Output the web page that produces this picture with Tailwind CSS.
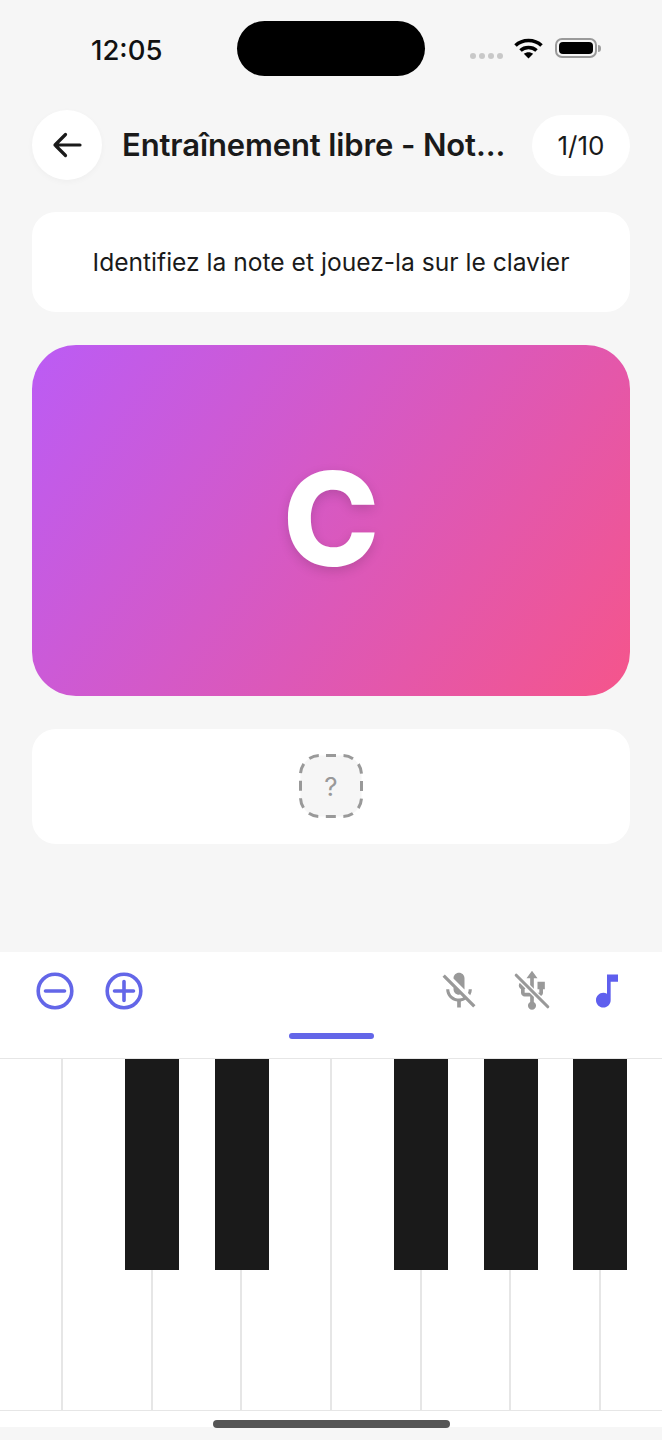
<!DOCTYPE html>
<html lang="fr">
<head>
    <meta charset="UTF-8">
    <meta name="viewport" content="width=device-width, initial-scale=1.0">
    <title>Entraînement libre</title>
    <script src="https://cdn.jsdelivr.net/npm/@tailwindcss/browser@4"></script>
</head>
<body class="bg-[#f6f6f6]">
    <div class="w-[662px] h-[1440px] overflow-hidden flex flex-col bg-[#f6f6f6] font-['Inter',sans-serif] text-[#1a1a1a]">

        <!-- Status bar -->
        <div class="h-[110px] shrink-0 flex items-start pt-[21px]">
            <div class="w-[237px] pl-[91px] pt-[13px] text-[27.5px] leading-[32px] font-medium text-[#111]">12:05</div>
            <div class="w-[188px] h-[55px] rounded-full bg-black"></div>
            <div class="flex items-center pl-[45px] pt-[17px]">
                <div class="flex gap-[3px] mt-[15px]">
                    <span class="w-[6px] h-[6px] rounded-full bg-[#c8c8c8]"></span>
                    <span class="w-[6px] h-[6px] rounded-full bg-[#c8c8c8]"></span>
                    <span class="w-[6px] h-[6px] rounded-full bg-[#c8c8c8]"></span>
                    <span class="w-[6px] h-[6px] rounded-full bg-[#c8c8c8]"></span>
                </div>
                <svg class="ml-[11px]" width="29" height="21" viewBox="0 0 29 21" fill="none">
                    <path d="M1.5 7.5C8.5 .8 20.5 .8 27.5 7.5" stroke="#000" stroke-width="3.6"/>
                    <path d="M6.5 12.5C10.8 8.5 18.2 8.5 22.5 12.5" stroke="#000" stroke-width="3.6"/>
                    <path d="M14.5 20.5L9.8 15.8C12.4 13.6 16.6 13.6 19.2 15.8Z" fill="#000"/>
                </svg>
                <div class="ml-[12px] w-[42px] h-[20px] rounded-[7px] border-2 border-[#9a9a9a] p-[2px] mb-[1px]">
                    <div class="w-full h-full rounded-[4px] bg-black"></div>
                </div>
                <div class="ml-[1px] w-[3px] h-[7px] rounded-r-full bg-[#a0a0a0]"></div>
            </div>
        </div>

        <!-- Header -->
        <div class="h-[70px] shrink-0 flex items-center pl-[32px] pr-[32px]">
            <button class="w-[70px] h-[70px] shrink-0 rounded-full bg-white flex items-center justify-center shadow-[0_2px_6px_rgba(0,0,0,0.03)]">
                <svg width="32" height="32" viewBox="0 0 32 32" fill="none" stroke="#1a1a1a" stroke-width="3.2" stroke-linecap="round" stroke-linejoin="round">
                    <path d="M29 16H4M14.5 5.5L4 16l10.5 10.5"/>
                </svg>
            </button>
            <h1 class="ml-[20px] w-[410px] shrink-0 whitespace-nowrap text-[31px] leading-[36px] font-semibold tracking-[-0.12px]">Entraînement libre - Not...</h1>
            <div class="w-[98px] h-[61px] shrink-0 rounded-full bg-white flex items-center justify-center text-[26px]">1/10</div>
        </div>

        <!-- Instruction -->
        <div class="mx-[32px] mt-[32px] h-[100px] shrink-0 rounded-[24px] bg-white flex items-center justify-center text-[24.6px] leading-[30px]">
            Identifiez la note et jouez-la sur le clavier
        </div>

        <!-- Note card -->
        <div class="mx-[32px] mt-[33px] h-[351px] shrink-0 rounded-[44px] bg-linear-[125deg] from-[#bb5cf5] to-[#f5558b] flex items-center justify-center">
            <span class="mb-[4px] text-[130px] leading-none font-[850] text-white [text-shadow:0_4px_12px_rgba(0,0,0,0.15)]">C</span>
        </div>

        <!-- Answer slot -->
        <div class="mx-[32px] mt-[33px] h-[115px] shrink-0 rounded-[24px] bg-white flex items-center justify-center">
            <div class="relative mb-[1px] w-[64px] h-[64px] flex items-center justify-center text-[26px] text-[#999]">
                <svg class="absolute inset-0" width="64" height="64" viewBox="0 0 64 64">
                    <rect x="1.5" y="1.5" width="61" height="61" rx="19" fill="#f6f6f6" stroke="#999" stroke-width="3" stroke-dasharray="10 7.58" stroke-dashoffset="-6.5"/>
                </svg>
                <span class="relative">?</span>
            </div>
        </div>

        <div class="flex-1"></div>

        <!-- Toolbar -->
        <div class="h-[107px] shrink-0 bg-white border-b border-[#e6e6e6] flex flex-col">
            <div class="flex items-center justify-between pt-[17px] pl-[34.5px] pr-[33px]">
                <div class="flex gap-[29.5px]">
                    <svg width="40" height="44" viewBox="0 0 40 44" fill="none" stroke="#6366e8" stroke-width="3.6" stroke-linecap="round">
                        <circle cx="20" cy="22" r="16.8"/>
                        <path d="M10.5 22h19"/>
                    </svg>
                    <svg width="40" height="44" viewBox="0 0 40 44" fill="none" stroke="#6366e8" stroke-width="3.6" stroke-linecap="round">
                        <circle cx="20" cy="22" r="16.8"/>
                        <path d="M10.5 22h19M20 12.5v19"/>
                    </svg>
                </div>
                <div class="flex">
                    <svg width="44" height="44" viewBox="0 0 24 24" fill="#999">
                        <path d="M19 11h-1.7c0 .74-.16 1.43-.43 2.05l1.23 1.23c.56-.98.9-2.09.9-3.28zm-4.02.17c0-.06.02-.11.02-.17V5c0-1.66-1.34-3-3-3s-3 1.34-3 3v.18l5.98 5.99zM4.27 3L3 4.27l6.01 6.01V11c0 1.66 1.33 3 2.99 3 .22 0 .44-.03.65-.08l1.66 1.66c-.71.33-1.5.52-2.31.52-2.76 0-5.3-2.1-5.3-5.1H5c0 3.41 2.72 6.23 6 6.72V21h2v-3.28c.91-.13 1.77-.45 2.54-.9L19.73 21 21 19.73 4.27 3z"/>
                    </svg>
                    <svg class="ml-[29px]" width="44" height="44" viewBox="0 0 24 24" fill="#999">
                        <path d="M15 7v4h1v2h-3V5h2l-3-4-3 4h2v8H8v-2.07c.7-.37 1.2-1.08 1.2-1.93 0-1.21-.99-2.2-2.2-2.2-1.21 0-2.2.99-2.2 2.2 0 .85.5 1.56 1.2 1.93V13c0 1.11.89 2 2 2h3v3.05c-.71.37-1.2 1.1-1.2 1.95 0 1.22.99 2.2 2.2 2.2 1.21 0 2.2-.98 2.2-2.2 0-.85-.49-1.58-1.2-1.95V15h3c1.11 0 2-.89 2-2v-2h1V7h-4z"/>
                        <path d="M3 3l18 18" stroke="#fff" stroke-width="3.2"/>
                        <path d="M3.4 3.4l17.2 17.2" stroke="#999" stroke-width="1.7" stroke-linecap="round"/>
                    </svg>
                    <svg class="ml-[31px]" width="44" height="44" viewBox="0 0 24 24" fill="#5f5fee">
                        <path d="M12 3v10.55c-.59-.34-1.27-.55-2-.55-2.21 0-4 1.79-4 4s1.79 4 4 4 4-1.79 4-4V7h4V3h-6z"/>
                    </svg>
                </div>
            </div>
            <div class="mx-auto mt-[20px] w-[85px] h-[6px] rounded-full bg-[#6366e8]"></div>
        </div>

        <!-- Piano -->
        <div class="relative h-[352px] shrink-0 overflow-hidden bg-white border-b border-[#e6e6e6]">
            <div class="flex h-full ml-[-26.67px]">
                <div class="w-[89.67px] shrink-0 h-full border-r-2 border-[#e6e6e6]"></div>
                <div class="w-[89.67px] shrink-0 h-full border-r-2 border-[#e6e6e6]"></div>
                <div class="w-[89.67px] shrink-0 h-full border-r-2 border-[#e6e6e6]"></div>
                <div class="w-[89.67px] shrink-0 h-full border-r-2 border-[#e6e6e6]"></div>
                <div class="w-[89.67px] shrink-0 h-full border-r-2 border-[#e6e6e6]"></div>
                <div class="w-[89.67px] shrink-0 h-full border-r-2 border-[#e6e6e6]"></div>
                <div class="w-[89.67px] shrink-0 h-full border-r-2 border-[#e6e6e6]"></div>
                <div class="w-[89.67px] shrink-0 h-full"></div>
            </div>
            <div class="absolute top-0 left-[125px] w-[54px] h-[211px] bg-[#1a1a1a]"></div>
            <div class="absolute top-0 left-[214.5px] w-[54px] h-[211px] bg-[#1a1a1a]"></div>
            <div class="absolute top-0 left-[394px] w-[54px] h-[211px] bg-[#1a1a1a]"></div>
            <div class="absolute top-0 left-[483.5px] w-[54px] h-[211px] bg-[#1a1a1a]"></div>
            <div class="absolute top-0 left-[573px] w-[54px] h-[211px] bg-[#1a1a1a]"></div>
        </div>

        <!-- Home indicator -->
        <div class="h-[16px] shrink-0 bg-white relative">
            <div class="absolute left-[213px] top-[9px] w-[237px] h-[8px] rounded-full bg-[#555]"></div>
        </div>
        <div class="flex-none h-[13px] bg-[#f6f6f6]"></div>
    </div>
</body>
</html>
